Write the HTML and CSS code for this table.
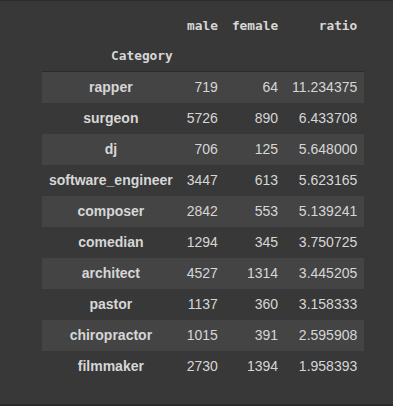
FILE: index.html
```html
<!DOCTYPE html>
<html>
<head>
<meta charset="utf-8">
<link rel="stylesheet" href="styles.css">
</head>
<body>
<div class="output">
<table class="df">
<thead>
<tr class="hrow1"><th class="blank"></th><th>male</th><th>female</th><th>ratio</th></tr>
<tr class="hrow2"><th class="idxname">Category</th><th></th><th></th><th></th></tr>
</thead>
<tbody>
<tr><th>rapper</th><td>719</td><td>64</td><td>11.234375</td></tr>
<tr><th>surgeon</th><td>5726</td><td>890</td><td>6.433708</td></tr>
<tr><th>dj</th><td>706</td><td>125</td><td>5.648000</td></tr>
<tr><th>software_engineer</th><td>3447</td><td>613</td><td>5.623165</td></tr>
<tr><th>composer</th><td>2842</td><td>553</td><td>5.139241</td></tr>
<tr><th>comedian</th><td>1294</td><td>345</td><td>3.750725</td></tr>
<tr><th>architect</th><td>4527</td><td>1314</td><td>3.445205</td></tr>
<tr><th>pastor</th><td>1137</td><td>360</td><td>3.158333</td></tr>
<tr><th>chiropractor</th><td>1015</td><td>391</td><td>2.595908</td></tr>
<tr><th>filmmaker</th><td>2730</td><td>1394</td><td>1.958393</td></tr>
</tbody>
</table>
</div>
</body>
</html>
```
FILE: styles.css
```css
html, body {
  margin: 0;
  padding: 0;
  background: #383838;
}
body {
  height: 406px;
  box-sizing: border-box;
  border-top: 1px solid #2b2b2b;
  border-bottom: 2px solid #2b2b2b;
  overflow: hidden;
}
.output {
  padding: 9px 0 0 42px;
}
.df {
  border-collapse: collapse;
  border-spacing: 0;
  color: #d6d6d6;
  font-family: "Liberation Sans", Arial, sans-serif;
  font-size: 14px;
}
.df th, .df td {
  padding: 0 7px;
  text-align: right;
  white-space: nowrap;
}
.df thead th {
  font-family: "DejaVu Sans Mono", monospace;
  font-size: 12.8px;
  font-weight: bold;
  color: #d6d6d6;
}
.hrow1 th {
  height: 30px;
}
.hrow2 th {
  height: 31px;
}
.df thead tr.hrow2 {
  border-bottom: 1px solid #2b2b2b;
}
.df tbody tr {
  height: 31px;
}
.df tbody th {
  text-align: center;
  font-weight: bold;
}
.df tbody tr:nth-child(odd) {
  background: #444444;
}
```
